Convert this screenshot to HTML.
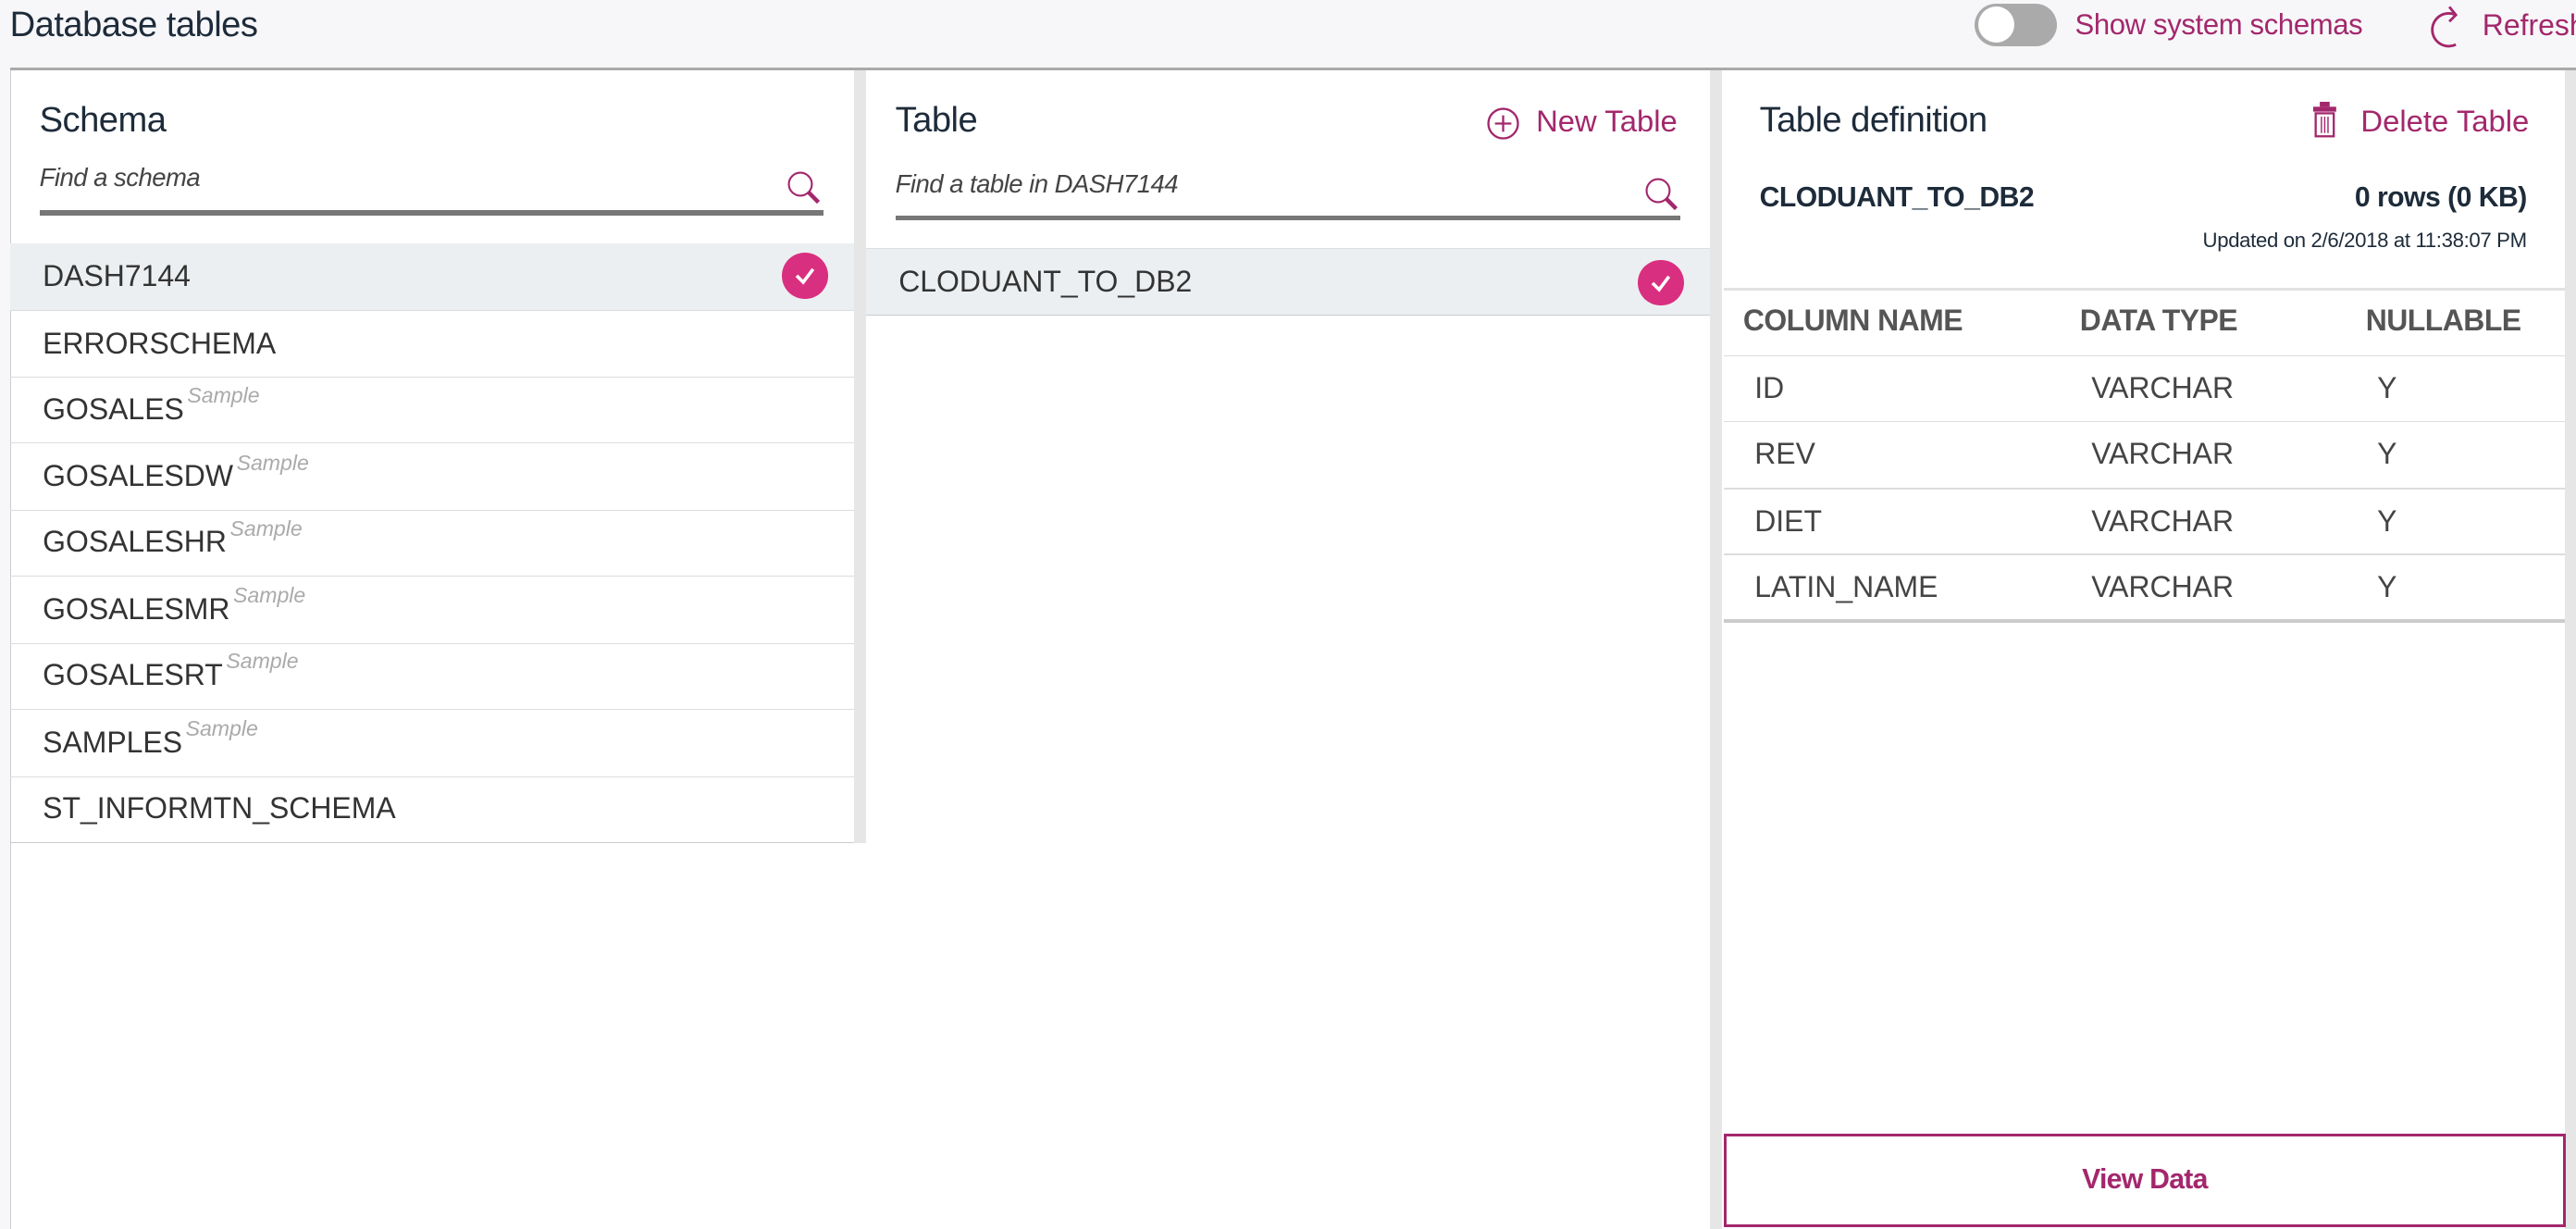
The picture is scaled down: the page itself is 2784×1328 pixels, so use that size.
<!DOCTYPE html>
<html><head><meta charset="utf-8"><style>
*{margin:0;padding:0;box-sizing:border-box}
html,body{width:2784px;height:1328px;overflow:hidden;background:#f7f7f9;font-family:"Liberation Sans",sans-serif}
#w{position:absolute;left:0;top:0;width:1568px;height:748px;zoom:1.77551}
.a{position:absolute;white-space:nowrap}
.panel{position:absolute;background:#fff;top:43px;height:705px}
.t{font-size:21.5px;color:#1d2b3a;letter-spacing:-0.3px}
.ph{font-size:15.5px;font-style:italic;color:#444;letter-spacing:-0.3px}
.row{position:absolute;height:41px;border-bottom:1px solid #ddd;font-size:18px;color:#333;padding-left:20px;line-height:40px;letter-spacing:0}
.row i{font-size:13px;color:#aaa;position:relative;top:-10px;margin-left:2px;line-height:0}
.m{color:#a3276c}
.chk{position:absolute;width:28px;height:28px;border-radius:50%;background:#d92f80}
.c{font-size:18px;color:#444}
.h{font-size:18px;font-weight:bold;color:#555;letter-spacing:-0.3px}
</style></head><body><div id="w">
<div class="a t" style="left:6px;top:3px">Database tables</div>
<div class="a" style="left:1202px;top:2px;width:50px;height:26px;border-radius:13px;background:#aaa"></div>
<div class="a" style="left:1204px;top:4px;width:22px;height:22px;border-radius:50%;background:#fff"></div>
<div class="a m" style="left:1263px;top:5px;font-size:17.5px;letter-spacing:-0.2px">Show system schemas</div>
<svg class="a" style="left:1478px;top:1px" width="26" height="30" viewBox="0 0 26 30"><path d="M17 8 A10 10 0 1 0 17 26" fill="none" stroke="#a3276c" stroke-width="1.6"/><path d="M13 3 L17 8 L13 12" fill="none" stroke="#a3276c" stroke-width="1.6"/></svg>
<div class="a m" style="left:1511px;top:5px;font-size:18px">Refresh</div>
<div class="a" style="left:6px;top:41px;width:1562px;height:2px;background:#aaa"></div>

<div class="panel" style="left:6px;width:514px;border-left:1px solid #ccc"></div>
<div class="a" style="left:520px;top:43px;width:7px;height:470px;background:#e6e6e6"></div>
<div class="a" style="left:520px;top:513px;width:7px;height:235px;background:#fff"></div>
<div class="a t" style="left:24px;top:61px">Schema</div>
<div class="a ph" style="left:24px;top:99px">Find a schema</div>
<svg class="a" style="left:478px;top:103px" width="24" height="24"><circle cx="9" cy="9" r="7" fill="none" stroke="#a3276c" stroke-width="1.2"/><path d="M14 14 L20 20" stroke="#a3276c" stroke-width="2.5"/></svg>
<div class="a" style="left:24px;top:128px;width:477px;height:3px;background:#777"></div>
<div class="a" style="left:6px;top:148px;width:514px;height:1px;background:#ddd"></div>
<div class="row" style="left:6px;top:148px;width:514px;background:#eceff1">DASH7144</div>
<div class="chk" style="left:476px;top:154px"></div>
<svg class="a" style="left:476px;top:154px" width="28" height="28"><path d="M9 14 L13 18 L19 10" fill="none" stroke="#fff" stroke-width="2"/></svg>
<div class="row" style="left:6px;top:189px;width:514px">ERRORSCHEMA</div>
<div class="row" style="left:6px;top:229px;width:514px">GOSALES<i>Sample</i></div>
<div class="row" style="left:6px;top:270px;width:514px">GOSALESDW<i>Sample</i></div>
<div class="row" style="left:6px;top:310px;width:514px">GOSALESHR<i>Sample</i></div>
<div class="row" style="left:6px;top:351px;width:514px">GOSALESMR<i>Sample</i></div>
<div class="row" style="left:6px;top:391px;width:514px">GOSALESRT<i>Sample</i></div>
<div class="row" style="left:6px;top:432px;width:514px">SAMPLES<i>Sample</i></div>
<div class="row" style="left:6px;top:472px;width:514px;border-bottom-color:#ccc">ST_INFORMTN_SCHEMA</div>

<div class="panel" style="left:527px;width:514px"></div>
<div class="a" style="left:1041px;top:43px;width:7px;height:705px;background:#e6e6e6"></div>
<div class="a t" style="left:545px;top:61px">Table</div>
<svg class="a" style="left:904px;top:64px" width="22" height="22"><circle cx="11" cy="11" r="9" fill="none" stroke="#a3276c" stroke-width="1.3"/><path d="M11 6V16M6 11H16" stroke="#a3276c" stroke-width="1.3"/></svg>
<div class="a m" style="left:935px;top:63px;font-size:18.5px">New Table</div>
<div class="a ph" style="left:545px;top:103px">Find a table in DASH7144</div>
<svg class="a" style="left:1000px;top:107px" width="24" height="24"><circle cx="9" cy="9" r="7" fill="none" stroke="#a3276c" stroke-width="1.2"/><path d="M14 14 L20 20" stroke="#a3276c" stroke-width="2.5"/></svg>
<div class="a" style="left:545px;top:131px;width:478px;height:3px;background:#777"></div>
<div class="row" style="left:527px;top:151px;width:514px;background:#eceff1;border-top:1px solid #ddd;border-bottom-color:#ccc">CLODUANT_TO_DB2</div>
<div class="chk" style="left:997px;top:158px"></div>
<svg class="a" style="left:997px;top:158px" width="28" height="28"><path d="M9 14 L13 18 L19 10" fill="none" stroke="#fff" stroke-width="2"/></svg>

<div class="panel" style="left:1048px;width:513px"></div>
<div class="a" style="left:1561px;top:43px;width:7px;height:705px;background:#e6e6e6"></div>
<div class="a t" style="left:1071px;top:61px">Table definition</div>
<svg class="a" style="left:1408px;top:62px" width="16" height="22"><rect x="4" y="0" width="6" height="3" fill="#a3276c"/><rect x="0" y="3" width="14" height="3" fill="#a3276c"/><rect x="1.5" y="7" width="11" height="14" fill="none" stroke="#a3276c" stroke-width="1.3"/><path d="M5 9V19M7 9V19M9 9V19" stroke="#a3276c" stroke-width="0.8"/></svg>
<div class="a m" style="left:1437px;top:63px;font-size:18.5px">Delete Table</div>
<div class="a" style="left:1071px;top:111px;font-size:17px;font-weight:bold;color:#1d2b3a;letter-spacing:-0.3px">CLODUANT_TO_DB2</div>
<div class="a" style="right:30px;top:111px;font-size:17px;font-weight:bold;color:#1d2b3a;letter-spacing:-0.3px">0 rows (0 KB)</div>
<div class="a" style="right:30px;top:139px;font-size:12.5px;color:#1d2b3a;letter-spacing:-0.2px">Updated on 2/6/2018 at 11:38:07 PM</div>
<div class="a" style="left:1049px;top:175px;width:512px;height:2px;background:#e2e2e2"></div>
<div class="a h" style="left:1061px;top:185px">COLUMN NAME</div>
<div class="a h" style="left:1266px;top:185px">DATA TYPE</div>
<div class="a h" style="left:1440px;top:185px">NULLABLE</div>
<div class="a" style="left:1049px;top:216px;width:512px;height:1px;background:#ddd"></div>
<div class="a c" style="left:1068px;top:226px">ID</div><div class="a c" style="left:1273px;top:226px">VARCHAR</div><div class="a c" style="left:1447px;top:226px">Y</div>
<div class="a" style="left:1049px;top:256px;width:512px;height:1px;background:#ddd"></div>
<div class="a c" style="left:1068px;top:266px">REV</div><div class="a c" style="left:1273px;top:266px">VARCHAR</div><div class="a c" style="left:1447px;top:266px">Y</div>
<div class="a" style="left:1049px;top:297px;width:512px;height:1px;background:#ddd"></div>
<div class="a c" style="left:1068px;top:307px">DIET</div><div class="a c" style="left:1273px;top:307px">VARCHAR</div><div class="a c" style="left:1447px;top:307px">Y</div>
<div class="a" style="left:1049px;top:337px;width:512px;height:1px;background:#ddd"></div>
<div class="a c" style="left:1068px;top:347px">LATIN_NAME</div><div class="a c" style="left:1273px;top:347px">VARCHAR</div><div class="a c" style="left:1447px;top:347px">Y</div>
<div class="a" style="left:1049px;top:377px;width:512px;height:2px;background:#ccc"></div>
<div class="a" style="left:1049px;top:690px;width:513px;height:57px;border:2px solid #a3276c;text-align:center;line-height:53px;font-size:17px;font-weight:bold;color:#a3276c;letter-spacing:-0.4px">View Data</div>
</div></body></html>
